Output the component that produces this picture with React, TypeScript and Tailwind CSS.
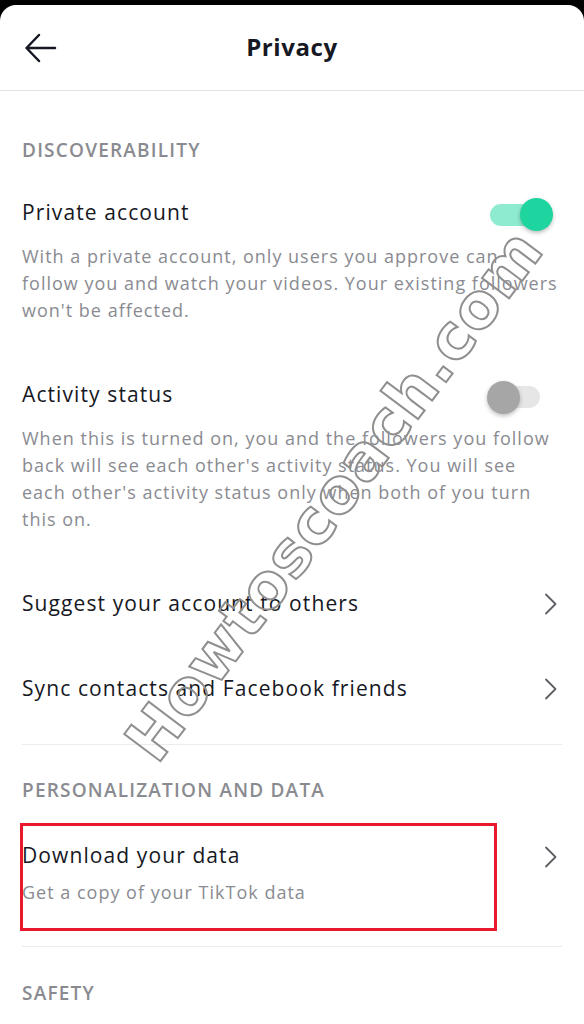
import { ReactNode } from "react";

const font = { fontFamily: '"Open Sans", "Liberation Sans", sans-serif' };

function Chevron() {
  return (
    <svg width="14" height="22" viewBox="0 0 14 22" fill="none" className="shrink-0 mr-[4px]">
      <path d="M2 1.5l9.5 9.5L2 20.5" stroke="#5e5f65" strokeWidth="1.8" strokeLinecap="round" strokeLinejoin="round" />
    </svg>
  );
}

function Toggle({ on }: { on: boolean }) {
  return (
    <div className="relative w-[66px] h-[33px] shrink-0">
      <div
        className={
          "absolute left-[3px] top-[5.5px] w-[50px] h-[22px] rounded-full " +
          (on ? "bg-[#8eebd0]" : "bg-[#e6e6e6]")
        }
      />
      <div
        className={
          "absolute top-0 w-[33px] h-[33px] rounded-full shadow-[0_2px_4px_rgba(0,0,0,0.25)] " +
          (on ? "left-[33px] bg-[#1ed49f]" : "left-0 bg-[#a6a6a6]")
        }
      />
    </div>
  );
}

function SectionLabel({ children, className }: { children: ReactNode; className?: string }) {
  return (
    <div
      className={
        "h-[40px] leading-[40px] text-[19px] tracking-[1.2px] font-semibold text-[#8a8b91] " + (className ?? "")
      }
    >
      {children}
    </div>
  );
}

function LinkRow({ label }: { label: string }) {
  return (
    <div className="h-[85px] flex items-center justify-between">
      <span className="text-[21px] tracking-[1.1px] text-[#161823]">{label}</span>
      <Chevron />
    </div>
  );
}

export default function App() {
  return (
    <div className="bg-black pt-[5px] min-h-screen w-[584px]" style={font}>
      <div className="relative bg-white rounded-t-[16px] min-h-[1019px] overflow-hidden">
        <header className="h-[86px] border-b border-[#e3e3e4] flex items-center justify-center relative">
          <svg
            className="absolute left-[24px] top-[28px]"
            width="34"
            height="32"
            viewBox="0 0 34 32"
            fill="none"
          >
            <path
              d="M31 15H3M15 2L2.5 15 15 28"
              stroke="#161823"
              strokeWidth="2.5"
              strokeLinecap="round"
              strokeLinejoin="round"
            />
          </svg>
          <h1 className="text-[24px] tracking-[0.6px] font-bold text-[#161823] -mt-[1px]">Privacy</h1>
        </header>

        <main className="px-[22px]">
          <SectionLabel className="mt-[39px]">DISCOVERABILITY</SectionLabel>

          <div className="mt-[29px] flex items-center justify-between h-[28px]">
            <span className="text-[21px] tracking-[1.1px] text-[#161823]">Private account</span>
            <div className="mr-[9px] mt-[3px]">
              <Toggle on />
            </div>
          </div>
          <p className="mt-[16px] text-[18px] tracking-[1px] leading-[27px] text-[#8a8b91]">
            With a private account, only users you approve can
            <br />
            follow you and watch your videos. Your existing followers won't be affected.
          </p>

          <div className="mt-[57px] flex items-center justify-between h-[28px]">
            <span className="text-[21px] tracking-[1.1px] text-[#161823]">Activity status</span>
            <div className="mr-[9px] mt-[4px]">
              <Toggle on={false} />
            </div>
          </div>
          <p className="mt-[16px] text-[18px] tracking-[1px] leading-[27px] text-[#8a8b91]">
            When this is turned on, you and the followers you follow back will see each other's activity status. You
            will see each other's activity status only when both of you turn this on.
          </p>

          <div className="mt-[28px]">
            <LinkRow label="Suggest your account to others" />
            <LinkRow label="Sync contacts and Facebook friends" />
          </div>

          <div className="mt-[13px] border-t border-[#ececed]" />

          <SectionLabel className="mt-[25px]">PERSONALIZATION AND DATA</SectionLabel>

          <div className="relative mt-[13px] h-[108px] flex justify-between">
            <div className="pt-[18px]">
              <div className="text-[21px] tracking-[1.1px] leading-[28px] text-[#161823]">Download your data</div>
              <div className="mt-[10px] text-[18px] tracking-[1px] leading-[27px] text-[#8a8b91]">
                Get a copy of your TikTok data
              </div>
            </div>
            <div className="pt-[23px]">
              <Chevron />
            </div>
            <div className="absolute left-[-2px] top-0 w-[477px] h-[108px] border-[3px] border-[#e8192c] pointer-events-none" />
          </div>

          <div className="mt-[15px] border-t border-[#ececed]" />

          <SectionLabel className="mt-[26px]">SAFETY</SectionLabel>
        </main>

        <div
          className="absolute left-[334px] top-[490px] -translate-x-1/2 -translate-y-1/2 -rotate-[53deg] whitespace-nowrap pointer-events-none text-[62px] font-bold tracking-[1px] text-transparent [-webkit-text-stroke:2px_#8f8f8f]"
          style={{ fontFamily: '"DejaVu Sans", sans-serif' }}
        >
          Howtoscoach.com
        </div>
      </div>
    </div>
  );
}
